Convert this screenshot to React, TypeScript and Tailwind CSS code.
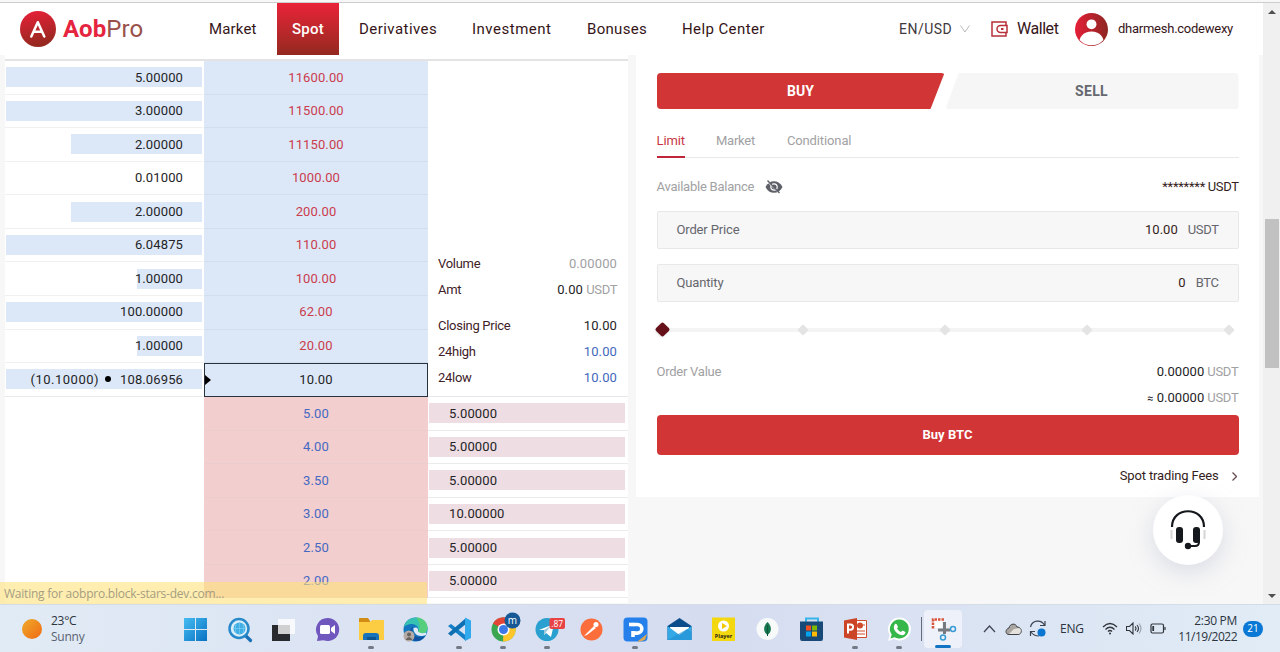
import React from "react";

const ASKS = [
  { qty: "5.00000", price: "11600.00", bar: "w-[196px]" },
  { qty: "3.00000", price: "11500.00", bar: "w-[196px]" },
  { qty: "2.00000", price: "11150.00", bar: "w-[131px]" },
  { qty: "0.01000", price: "1000.00", bar: "w-0" },
  { qty: "2.00000", price: "200.00", bar: "w-[131px]" },
  { qty: "6.04875", price: "110.00", bar: "w-[196px]" },
  { qty: "1.00000", price: "100.00", bar: "w-[65px]" },
  { qty: "100.00000", price: "62.00", bar: "w-[196px]" },
  { qty: "1.00000", price: "20.00", bar: "w-[65px]" },
];

const BIDS = [
  { qty: "5.00000", price: "5.00" },
  { qty: "5.00000", price: "4.00" },
  { qty: "5.00000", price: "3.50" },
  { qty: "10.00000", price: "3.00" },
  { qty: "5.00000", price: "2.50" },
  { qty: "5.00000", price: "2.00" },
];

function Logo() {
  return (
    <div className="flex items-center">
      <svg width="36" height="36" viewBox="0 0 36 36">
        <defs>
          <linearGradient id="logo" x1="0" y1="0" x2="0.2" y2="1">
            <stop offset="0" stopColor="#ea2039" />
            <stop offset="1" stopColor="#962820" />
          </linearGradient>
        </defs>
        <circle cx="18" cy="18" r="18" fill="url(#logo)" />
        <path d="M11.3 25.5 17.8 11.2 24.3 25.5M14 20.8h7.8" fill="none" stroke="#fff" strokeWidth="2.5" strokeLinecap="round" strokeLinejoin="round" />
      </svg>
      <div className="ml-[7px] text-[24px] leading-9 tracking-[0.1px]">
        <span className="font-bold text-[#e5253f]">Aob</span>
        <span className="text-[#985048]">Pro</span>
      </div>
    </div>
  );
}

function Header() {
  return (
    <header className="flex h-[52px] shrink-0 items-center bg-white pl-5 text-[15px] text-[#351518]">
      <div className="w-[189px]">
        <Logo />
      </div>
      <nav className="flex h-full items-center">
        <span className="w-[68px] tracking-[0.15px]">Market</span>
        <span className="flex h-full w-[62px] items-center justify-center bg-linear-to-b from-[#ea2139] to-[#942820] font-medium tracking-[0.2px] text-white">Spot</span>
        <span className="ml-5 w-[113px] tracking-[0.45px]">Derivatives</span>
        <span className="w-[115px] tracking-[0.5px]">Investment</span>
        <span className="w-[95px] tracking-[0.3px]">Bonuses</span>
        <span className="w-[217px] tracking-[0.4px]">Help Center</span>
      </nav>
      <span className="w-[61px] text-[14px] tracking-[0.5px] text-[#3f3a3b]">EN/USD</span>
      <svg width="10" height="8" viewBox="0 0 10 8" fill="none" stroke="#b9b9b9">
        <path d="M.5.5 5 7 9.500.5" />
      </svg>
      <svg className="ml-[21px]" width="17" height="16" viewBox="0 0 17 16" fill="none" stroke="#b7303a" strokeWidth="1.500">
        <path d="M15 4V1H1v14h14v-3M16 4.500H9.500A3.500 3.500 0 0 0 9.500 11.500H16V4.500Z" />
        <path d="M10 8h2.500" strokeWidth="2" />
      </svg>
      <span className="ml-[9px] w-[58px] text-[16px] tracking-[-0.45px]">Wallet</span>
      <svg width="33" height="33" viewBox="0 0 32 32">
        <defs>
          <linearGradient id="user">
            <stop offset="0" stopColor="#e51f37" />
            <stop offset="1" stopColor="#8c2520" />
          </linearGradient>
          <clipPath id="face">
            <circle cx="16" cy="16" r="15.300" />
          </clipPath>
        </defs>
        <circle cx="16" cy="16" r="16" fill="url(#user)" />
        <g fill="#fff" clipPath="url(#face)">
          <circle cx="16" cy="11" r="4.800" />
          <path d="M3.500 32c0-9 5-14 12.500-14s12.500 5 12.500 14Z" />
        </g>
      </svg>
      <span className="ml-[10px] text-[13px] tracking-[-0.25px]">dharmesh.codewexy</span>
    </header>
  );
}

function Stat({ label, children, tone }: { label: string; children: React.ReactNode; tone: string }) {
  return (
    <div className="flex h-[26px] items-center justify-between">
      <span className="tracking-[-0.28px]">{label}</span>
      <span className={tone}>{children}</span>
    </div>
  );
}

function OrderBook() {
  return (
    <section className="flex h-[544px] w-[623px] border-t-2 border-[#e3e3e4] bg-white text-[13px] tracking-[0.12px] text-[#242426]">
      <div className="w-[199px] pr-px">
        {ASKS.map((r) => (
          <div key={r.price} className="flex h-[33.57px] items-center justify-end border-b border-[#f0f0f0]">
            <div className={`mr-px flex h-5 shrink-0 items-center justify-end bg-[#dce8f8] ${r.bar}`}>
              <span className="pr-[19px]">{r.qty}</span>
            </div>
          </div>
        ))}
        <div className="flex h-[33.57px] items-center border-b border-[#e9e9e9]">
          <div className="ml-px flex h-5 w-[196px] items-center justify-end bg-[#dce8f8] pr-[19px]">
            <span className="tracking-[0.5px]">(10.10000)</span>
            <span className="mx-[6px] size-1.5 rounded-full bg-black" />
            <span className="ml-[3px]">108.06956</span>
          </div>
        </div>
      </div>
      <div className="w-[224px] overflow-hidden text-center">
        {ASKS.map((r) => (
          <div key={r.price} className="flex h-[33.57px] items-center justify-center border-b border-[#d2deec] bg-[#dce8f8] text-[#cb3c4c]">
            {r.price}
          </div>
        ))}
        <div className="flex h-[34px] items-center border border-[#29313d] bg-[#dce8f8]">
          <svg width="6" height="10" viewBox="0 0 6 10">
            <path d="M0 0 6 5 0 10Z" />
          </svg>
          <span className="flex-1 pr-1.5">10.00</span>
        </div>
        {BIDS.map((r) => (
          <div key={r.price} className="flex h-[33.57px] items-center justify-center border-b border-[#ebcdd0] bg-[#f2cece] text-[#4569c2]">
            {r.price}
          </div>
        ))}
      </div>
      <div className="w-[200px]">
        <div className="flex h-[336px] flex-col justify-end border-b border-[#e5e8ea] pr-[11px] pb-[5px] pl-[10px] text-[#3f2228]">
          <Stat label="Volume" tone="text-[#a1a1a3]">0.00000</Stat>
          <Stat label="Amt" tone="text-[#242426]">
            0.00 <span className="tracking-[-0.4px] text-[#a1a1a3]">USDT</span>
          </Stat>
          <div className="h-[10px]" />
          <Stat label="Closing Price" tone="text-[#242426]">10.00</Stat>
          <Stat label="24high" tone="text-[#3f68bd]">10.00</Stat>
          <Stat label="24low" tone="text-[#3f68bd]">10.00</Stat>
        </div>
        {BIDS.map((r) => (
          <div key={r.price} className="flex h-[33.57px] items-center border-b border-[#ebebed] pl-px">
            <div className="flex h-5 w-[196px] items-center bg-[#eedde3] pl-5">{r.qty}</div>
          </div>
        ))}
      </div>
    </section>
  );
}

function Field({ label, value, unit }: { label: string; value: string; unit: string }) {
  return (
    <div className="flex h-[38px] items-center rounded-xs border border-[#e8e8e9] bg-[#f7f7f7] px-[19px] text-[#65666d]">
      <span className="flex-1 tracking-[-0.15px]">{label}</span>
      <span className="text-[#351d21]">{value}</span>
      <span className="ml-[10px] tracking-[-0.4px]">{unit}</span>
    </div>
  );
}

function OrderPanel() {
  return (
    <section className="h-[442px] w-[623px] bg-white pt-[18px] pr-[20.5px] pl-[20.5px] text-[13px] tracking-[0.05px] text-[#351d21]">
      <div className="flex h-9 text-[14px] font-bold">
        <div className="flex w-[288px] items-center justify-center rounded-sm bg-[#d23535] text-white [clip-path:polygon(0_0,100%_0,274px_100%,0_100%)]">BUY</div>
        <div className="flex flex-1 items-center justify-center rounded-sm bg-[#f6f6f6] tracking-[0.3px] text-[#65686f] [clip-path:polygon(14px_0,100%_0,100%_100%,1px_100%)]">SELL</div>
      </div>
      <div className="mt-[14px] flex h-[35px] items-center border-b border-[#e8e8e8] text-[#a1a1a3]">
        <span className="-mb-px flex h-[35px] items-center border-b-2 border-[#bf2639] pt-[3px] tracking-[-0.1px] text-[#c73544]">Limit</span>
        <span className="ml-[31px] pt-[1px] tracking-[-0.25px]">Market</span>
        <span className="ml-8 pt-[1px] tracking-[-0.12px]">Conditional</span>
      </div>
      <div className="mt-[13px] flex h-8 items-center text-[#a1a1a3]">
        <span className="w-[108px] tracking-[-0.23px]">Available Balance</span>
        <svg width="18" height="14" viewBox="0 0 18 14">
          <path d="M.5 7C4-.8 14-.8 17.500 7 14 14.800 4 14.800.5 7Z" fill="#5d6068" />
          <circle cx="9" cy="7" r="3.200" fill="#5d6068" stroke="#fff" strokeWidth="1.200" />
          <path d="m3 2.500 11 10.500" stroke="#fff" strokeWidth="1" />
          <path d="m2.500.5 12 12.500" stroke="#5d6068" strokeWidth="1.300" />
        </svg>
        <span className="ml-auto tracking-[-0.4px] text-[#351d21]">
          <span className="tracking-[-0.25px]">********</span> USDT
        </span>
      </div>
      <div className="mt-[8px] flex flex-col gap-[15px]">
        <Field label="Order Price" value="10.00" unit="USDT" />
        <Field label="Quantity" value="0" unit="BTC" />
      </div>
      <div className="mt-[19px] flex h-[17px] items-center pr-[7px]">
        <span className="z-10 -mr-1 size-[11px] rotate-45 rounded-xs bg-[#66111a] shadow-sm" />
        {[0, 1, 2, 3].map((i) => (
          <React.Fragment key={i}>
            <span className="h-1 flex-1 bg-[#f4f4f4]" />
            <span className="-mx-px size-2 rotate-45 rounded-[1px] bg-[#e4e4e4]" />
          </React.Fragment>
        ))}
      </div>
      <div className="mt-[21px] flex h-[26px] items-center justify-between tracking-[-0.25px] text-[#a1a1a3]">
        <span>Order Value</span>
        <span><span className="tracking-[0.05px] text-[#242426]">0.00000</span> USDT</span>
      </div>
      <div className="flex h-[26px] items-center justify-end tracking-[-0.25px] text-[#a1a1a3]">
        <span><span className="tracking-[0.05px] text-[#242426]"><span className="text-[11px]">≈</span> 0.00000</span> USDT</span>
      </div>
      <button className="mt-[4px] h-10 w-full rounded-sm bg-[#d23535] font-bold text-white">Buy BTC</button>
      <div className="mt-[8px] flex h-[26px] items-center justify-end tracking-[-0.14px]">
        Spot trading Fees
        <svg className="mr-[2px] ml-[13px]" width="5" height="9" viewBox="0 0 5 9" fill="none" stroke="#674d50" strokeWidth="1.300">
          <path d="m.5.5 4 4-4 4" />
        </svg>
      </div>
    </section>
  );
}

const ICONS: { art: React.ReactNode; running?: boolean; active?: boolean }[] = [
  {
    art: (
      <g fill="url(#win)">
        <path d="M1 1h11v11H1zM13 1h11v11H13zM1 13h11v11H1zM13 13h11v11H13z" />
      </g>
    ),
  },
  {
    art: (
      <>
        <path d="m18 18 5.500 5.500" stroke="#1671b9" strokeWidth="3.200" strokeLinecap="round" />
        <circle cx="12" cy="11.500" r="9.500" fill="#d9eef8" stroke="#2789ca" strokeWidth="2.500" />
        <circle cx="12.500" cy="11.500" r="6" fill="#40aee4" />
        <path d="M12.500 5.500v12M6.500 11.500h12M9 7q-1.500 4 0 9M16 7q1.500 4 0 9" fill="none" stroke="#78cdf2" strokeWidth=".7" />
      </>
    ),
  },
  {
    art: (
      <>
        <path d="M1 8h18v16H1z" fill="#292a2d" />
        <path d="M7 2h17v15H7z" fill="#fff" opacity=".78" />
      </>
    ),
  },
  {
    art: (
      <>
        <path d="M12.500 1a11.500 11.500 0 1 1-4 22.200L2 24l1-5A11.500 11.500 0 0 1 12.500 1Z" fill="#7057bd" />
        <rect x="5" y="8" width="10" height="9" rx="1.500" fill="#fff" />
        <path d="m16 11 4-3v9l-4-3Z" fill="#fff" />
      </>
    ),
  },
  {
    running: true,
    art: (
      <>
        <path d="M0 2q0-1 1-1h8l2 3v2H0z" fill="#d18c16" />
        <path d="M0 5h11l2-2h12v20H0z" fill="#fccc43" />
        <path d="M4 23v-4q0-3 3-3h10q3 0 3 3v4Z" fill="#1773bb" />
        <path d="M8 20h9v3H8z" fill="#0c5591" />
      </>
    ),
  },
  {
    art: (
      <>
        <circle cx="12.500" cy="12.500" r="12" fill="#1476be" />
        <path d="M1 10C3-2 22-3 24.500 11c.5 5-4 6-8 5-1 0-2-1-1-2C16 6 6 5 1 10Z" fill="#36c1b2" />
        <path d="M13 .5c9 0 12 7 11.500 11-1 5-5 5.500-8 4.500-1 0-2-1-1-2 3-5 0-11-2.500-13.500Z" fill="#55cf7c" />
        <path d="M10 10c-3 8 4 12 12 9-2 4-6 5.500-10 5-6-3-7-11-2-14Z" fill="#1052a1" />
        <path d="M10.500 11c3-1.500 5 0 4.500 3 .5 2 4 3 8.500 1.500l-.5 2.500c-7 3-13-1-12.500-7Z" fill="#e1eafa" />
        <circle cx="6" cy="19" r="5.500" fill="#b5aba4" />
        <circle cx="6" cy="17.500" r="2" fill="#69625e" />
        <path d="M2.500 23q3.500-6 7 0Z" fill="#69625e" />
      </>
    ),
  },
  {
    running: true,
    art: (
      <>
        <path d="m1 9 3-2 15 11.500V24Z" fill="#137fc6" />
        <path d="M1 16.500 19 1v6L4 19Z" fill="#0f6fb3" />
        <path d="m18 .5 6 3V21l-6 3Z" fill="#32a8ed" />
      </>
    ),
  },
  {
    running: true,
    art: (
      <>
        <circle cx="12.500" cy="12.500" r="12" fill="#3aa650" />
        <path d="M12.500 12.500 2 6.500A12 12 0 0 1 23 6.500Z" fill="#e24436" />
        <path d="M12.500 12.500 23 6.500a12 12 0 0 1-11 18Z" fill="#fdc72c" />
        <circle cx="12.500" cy="12.500" r="6" fill="#fff" />
        <circle cx="12.500" cy="12.500" r="4.500" fill="#3c78e8" />
        <circle cx="21.500" cy="3.500" r="8" fill="#165996" />
        <text x="21.500" y="6.500" textAnchor="middle" fill="#fff" fontSize="10">m</text>
      </>
    ),
  },
  {
    running: true,
    art: (
      <>
        <circle cx="12" cy="12.500" r="11.500" fill="#29a0cf" />
        <path d="m4 13 15-6-3 13-5-4-2 2v-5Z" fill="#fff" />
        <path d="m9 13 7-4-5 6-2 3Z" fill="#9ac8dd" />
        <rect x="14.500" y="1" width="15.500" height="11" rx="2" fill="#e74345" />
        <text x="22.200" y="9.500" textAnchor="middle" fill="#fff" fontSize="8.500">.87</text>
      </>
    ),
  },
  {
    art: (
      <>
        <circle cx="12.500" cy="12.500" r="11" fill="#fb6d3a" />
        <circle cx="17" cy="7.500" r="2.500" fill="#fff" />
        <path d="m15 9 2 2-9 7-3 1 3-3Z" fill="#fff" />
      </>
    ),
  },
  {
    running: true,
    art: (
      <>
        <rect x=".5" y=".5" width="24" height="24" rx="4" fill="#2680eb" />
        <path d="M10 20v-6M10 7.500h4.500a4.300 4.300 0 0 1 0 8.600H11" fill="none" stroke="#fff" strokeWidth="3.600" />
        <path d="M6 7.500h5" stroke="#fff" strokeWidth="3.600" />
        <path d="m15 24 9-7-2 6-7 2Z" fill="#dba956" />
      </>
    ),
  },
  {
    art: (
      <>
        <path d="m.5 9 12-8 12 8v14H.5Z" fill="#0c4d8c" />
        <path d="M3 10h19v9H3z" fill="#fff" />
        <path d="m.5 9 12 9 12-9v14H.5Z" fill="#35a9e6" />
        <path d="M.5 23 20 12l4.500 3v8Z" fill="#1f8fd4" opacity=".6" />
      </>
    ),
  },
  {
    art: (
      <>
        <path d="M1 .5h23v23.500H1z" fill="#f3d80f" />
        <circle cx="12.500" cy="9" r="5.500" fill="#fff" />
        <path d="m11 6 5 3-5 3Z" fill="#f0c800" />
        <text x="12.500" y="20.500" textAnchor="middle" fill="#292515" fontSize="5.500" fontWeight="bold">Player</text>
      </>
    ),
  },
  {
    art: (
      <>
        <circle cx="12.500" cy="12" r="11" fill="#f8faf9" />
        <path d="M12.500 5c5 5 4 10 0 13-4-3-5-8 0-13Z" fill="#16764f" />
        <path d="M12.500 8v11" stroke="#0d5a3a" strokeWidth="1" />
      </>
    ),
  },
  {
    art: (
      <>
        <path d="M7 5V1.500h12V5" fill="none" stroke="#38b5e8" strokeWidth="2" />
        <path d="M1 4.500h23v17q0 2.500-2 2.500H3Q1 24 1 21.500Z" fill="#194976" />
        <path d="M7 8.500h5v5H7Z" fill="#f25022" />
        <path d="M13 8.500h5v5h-5Z" fill="#7fba00" />
        <path d="M7 14.500h5v5H7Z" fill="#00a4ef" />
        <path d="M13 14.500h5v5h-5Z" fill="#ffb900" />
      </>
    ),
  },
  {
    running: true,
    art: (
      <>
        <path d="M13 3.500h10.500v17H13z" fill="#fff" stroke="#d04b2c" />
        <circle cx="17" cy="8.500" r="3" fill="#d04b2c" />
        <path d="M14 14h8M14 17h8M20 8h2" stroke="#d04b2c" />
        <path d="m1 3.500 13-2.500v22L1 20.500Z" fill="#cc4426" />
        <path d="M5 16.500v-9h2.500a2.500 2.500 0 0 1 0 5.200H5" fill="none" stroke="#fff" strokeWidth="2" />
      </>
    ),
  },
  {
    running: true,
    art: (
      <>
        <path d="M12.500.5A11.500 11.500 0 1 1 7 22.100L1 24 2.700 18A11.500 11.500 0 0 1 12.500.5Z" fill="#fff" />
        <path d="M12.500 2.500A9.500 9.500 0 1 1 7.500 20.200L3.500 21.500l1.200-4A9.500 9.500 0 0 1 12.500 2.500Z" fill="#35b849" />
        <path d="M8 7c1-1 2 0 3 3l-1 1.500q1.500 2.500 4 3.500l1.500-1.500 3 1.500c0 3-3 4-6 2.500C8 15.500 5 11 8 7Z" fill="#fff" />
      </>
    ),
  },
  {
    active: true,
    art: (
      <>
        <path d="M2 2h9v9H2Z" fill="#fff" />
        <path d="M13 2.500H2V12" fill="none" stroke="#d9543c" strokeWidth="2.500" strokeDasharray="2.500 1" />
        <path d="M13.500 5v12M7 13h12" stroke="#777b80" strokeWidth="3" />
        <circle cx="12" cy="20.500" r="2.500" fill="none" stroke="#399bd4" strokeWidth="1.500" />
        <circle cx="22" cy="12" r="2.500" fill="none" stroke="#399bd4" strokeWidth="1.500" />
      </>
    ),
  },
];

function Taskbar() {
  return (
    <footer className="flex h-12 items-center border-t border-[#d5dce6] bg-linear-to-r from-[#e1ebf5] via-[#d5dcf0] via-55% to-[#e1ecf6] font-['Open_Sans','Noto_Sans',sans-serif] text-[#2d3440]">
      <div className="flex w-[173px] items-center pl-[22px]">
        <span className="size-5 rounded-full bg-linear-to-br from-[#edaa29] to-[#ef6814]" />
        <div className="ml-[9px] text-[12px] leading-4 tracking-[-0.25px]">
          <div>23°C</div>
          <div className="text-[#596270]">Sunny</div>
        </div>
      </div>
      <div className="flex">
        {ICONS.map((it, i) => (
          <div key={i} className={`flex h-12 w-11 flex-col items-center ${it.active ? "relative" : ""}`}>
            {it.active && <span className="absolute top-[5px] left-[3px] h-[38px] w-[38px] rounded bg-[#eef1f9]" />}
            {it.active && <span className="absolute top-3 left-0 h-6 w-px bg-[#686c78]" />}
            <svg className="relative mt-3 shrink-0 overflow-visible" width="25" height="25" viewBox="0 0 25 25">
              <defs>
                <linearGradient id="win" x2="1" y2="1">
                  <stop offset="0" stopColor="#45bcf1" />
                  <stop offset="1" stopColor="#0872c3" />
                </linearGradient>
              </defs>
              {it.art}
            </svg>
            {it.running && <span className="mt-[4px] h-[3px] w-[6px] rounded-full bg-[#747985]" />}
            {it.active && <span className="relative mt-[3px] h-[3px] w-4 rounded-full bg-[#1474c4]" />}
          </div>
        ))}
      </div>
      <svg className="ml-[18px]" width="13" height="8" viewBox="0 0 13 8" fill="none" stroke="#3c4350" strokeWidth="1.200">
        <path d="m1 7 5.500-6L12 7" />
      </svg>
      <svg className="ml-[9px]" width="17" height="12" viewBox="0 0 17 12">
        <path d="M4 11.500C0 11.500 0 6 4 5 5 0 11 0 12 4c5 0 6 7 1 7.500Z" fill="#aaa5a0" stroke="#3d4248" />
        <path d="m4 11 5-5 5-1c3 1 2 6-1 6Z" fill="#e5e1dc" />
      </svg>
      <svg className="ml-[7px]" width="19" height="18" viewBox="0 0 19 18" fill="none" stroke="#3c4350" strokeWidth="1.200">
        <path d="M1.500 7C3 0 12-1 15.500 5M16 1v4.500h-5M1.500 16v-4.500H6M2 12c2 3 5 4 8 4" />
        <circle cx="12.500" cy="12.500" r="4" fill="#0b76d1" stroke="none" />
      </svg>
      <span className="ml-[12px] w-[42px] text-[12px] tracking-[-0.2px]">ENG</span>
      <svg width="16" height="13" viewBox="0 0 16 13" fill="none" stroke="#30343b" strokeWidth="1.300">
        <path d="M1 5q7-7 14 0M3.500 7.500q4.500-4.500 9 0M6 9.500q2-2 4 0" />
        <circle cx="8" cy="11.500" r="1" fill="#30343b" stroke="none" />
      </svg>
      <svg className="ml-[8px]" width="16" height="13" viewBox="0 0 16 13" fill="none" stroke="#30343b" strokeWidth="1.100">
        <path d="M.5 4.500h3L7 1v11L3.500 8.500h-3ZM9 4.500q2 2 0 4" />
        <path d="M11 3q3 3.500 0 7" />
        <path d="M13 1.500q4 5 0 10" opacity=".4" />
      </svg>
      <svg className="ml-[8px]" width="16" height="11" viewBox="0 0 16 11" fill="none" stroke="#30343b" strokeWidth="1.200">
        <rect x="1" y="1" width="12.500" height="9" rx="1.500" />
        <path d="M15 4v3" />
        <path d="M3.200 3v5" strokeWidth="1.800" />
      </svg>
      <div className="ml-auto text-right text-[12px] leading-4 tracking-[-0.3px]">
        <div>2:30 PM</div>
        <div className="tracking-[-0.5px]">11/19/2022</div>
      </div>
      <span className="mr-[17px] ml-[6px] flex h-4 w-5 items-center justify-center rounded-full bg-[#0a78d4] text-[10px] text-white">21</span>
    </footer>
  );
}

export default function App() {
  return (
    <div className="h-[652px] w-[1280px] overflow-hidden bg-[#f7f7f7] pt-[2px] font-[Roboto,sans-serif] leading-normal">
      <div className="relative flex h-[602px] overflow-hidden border-t border-[#cdcdcd]">
        <div className="flex w-[1263px] flex-col">
          <Header />
          <main className="flex min-h-0 flex-1 items-start">
            <div className="ml-[5px] bg-white pt-1">
              <OrderBook />
            </div>
            <div className="ml-2">
              <OrderPanel />
            </div>
          </main>
        </div>
        <aside className="flex w-[17px] flex-col items-center bg-[#f0f0f0] pt-[7px] pb-[6px]">
          <svg width="8" height="4" viewBox="0 0 8 4"><path d="m0 4 4-4 4 4Z" fill="#505050" /></svg>
          <div className="mt-[205px] h-[149px] w-[14px] bg-[#c1c1c1]" />
          <svg className="mt-auto" width="8" height="4" viewBox="0 0 8 4"><path d="m0 0 4 4 4-4Z" fill="#505050" /></svg>
        </aside>
        <div className="absolute bottom-0 left-0 flex h-[22px] w-[427px] items-center bg-[#ffe279]/60 pt-px pl-1 font-['Open_Sans','Noto_Sans',sans-serif] text-[12px] tracking-[-0.23px] text-[#a59d83]">
          Waiting for aobpro.block-stars-dev.com...
        </div>
        <button className="absolute top-[492px] left-[1153px] flex size-[70px] items-center justify-center rounded-full bg-white shadow-[0_7px_22px_#bbc3d680]">
          <svg width="36" height="40" viewBox="0 0 36 40" fill="none">
            <path d="M2 17C2-4 34-4 34 17" stroke="#15191e" strokeWidth="2.200" />
            <path d="M1.500 20v9M34.500 20v9" stroke="#d5d5d8" strokeWidth="2" />
            <rect x="6" y="17" width="7" height="16" rx="3" fill="#15191e" />
            <rect x="23" y="17" width="7" height="16" rx="3" fill="#15191e" />
            <path d="M29 28v4q0 4-4 4h-7" stroke="#15191e" strokeWidth="2" />
            <circle cx="18" cy="36" r="3.200" fill="#15191e" />
          </svg>
        </button>
      </div>
      <Taskbar />
    </div>
  );
}
